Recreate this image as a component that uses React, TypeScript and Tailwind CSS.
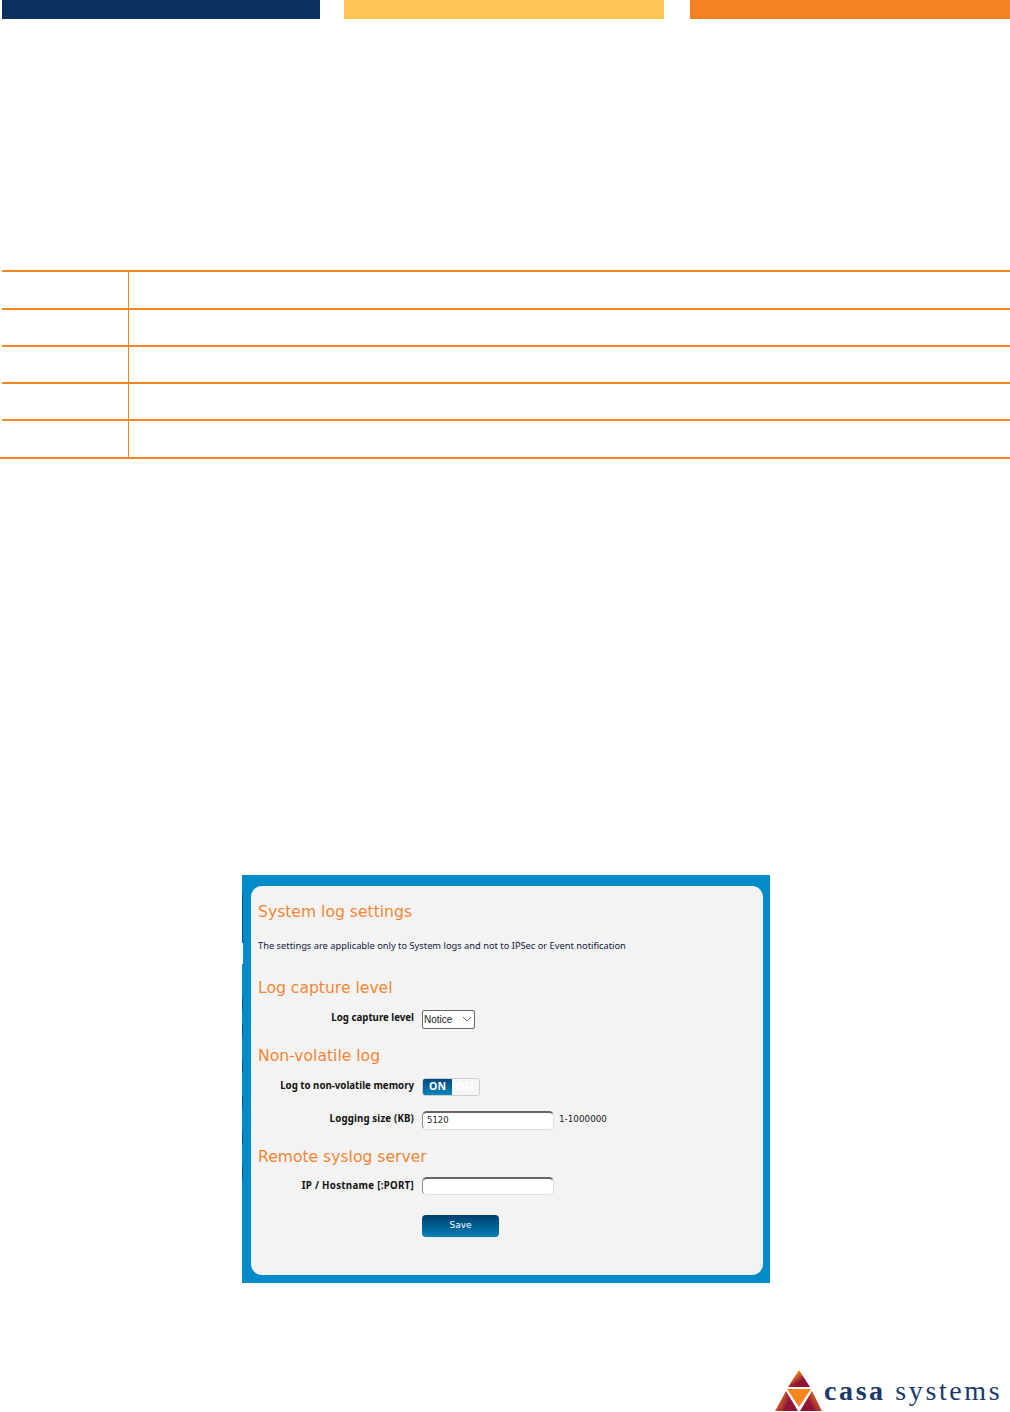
import React from "react";

const heading = "text-[#f58634] text-[15.6px] leading-[20px] font-['DejaVu_Sans',sans-serif] whitespace-nowrap";
const label = "w-[163px] text-right text-[9.7px] font-bold text-[#111] font-['Noto_Sans',sans-serif] whitespace-nowrap";
const input = "w-[132px] rounded-[5px] border border-[#dedede] border-t-2 border-t-[#666] border-l-[#888] bg-white";

function Row({ className = "" }: { className?: string }) {
  return (
    <div className={`flex border-t-2 border-[#f9851f] ${className}`}>
      <div className="w-[127px] border-r border-[#f9851f]" />
      <div className="flex-1" />
    </div>
  );
}

function Logo() {
  return (
    <svg width="48" height="42" viewBox="0 0 48 42" className="shrink-0">
      <defs>
        <linearGradient id="t" x1="0" y1="0" x2="1" y2="1">
          <stop offset="0.25" stopColor="#f7941d" />
          <stop offset="0.6" stopColor="#8f1436" />
        </linearGradient>
        <linearGradient id="l" x1="0" y1="0" x2="1" y2="0.4">
          <stop offset="0.1" stopColor="#f7941d" />
          <stop offset="0.7" stopColor="#8f1436" />
        </linearGradient>
        <linearGradient id="rr" x1="1" y1="0" x2="0" y2="0.6">
          <stop offset="0.1" stopColor="#f7941d" />
          <stop offset="0.7" stopColor="#8f1436" />
        </linearGradient>
      </defs>
      <polygon points="24,0 35,17 13,17" fill="url(#t)" />
      <polygon points="12,19 36,19 24,37" fill="#f7861f" />
      <polygon points="11,21 23,41 0,41" fill="url(#l)" />
      <polygon points="37,21 47,41 25,41" fill="url(#rr)" />
    </svg>
  );
}

export default function App() {
  return (
    <div className="w-[1010px] h-[1412px] bg-white overflow-hidden flex flex-col">
      <div className="flex h-[19px] shrink-0">
        <div className="ml-[2px] w-[318px] bg-[#0a3161]" />
        <div className="ml-[24px] w-[320px] bg-[#fec555]" />
        <div className="ml-[26px] w-[320px] bg-[#f58220]" />
      </div>

      <div className="mt-[251px] ml-[2px] shrink-0">
        <Row className="h-[38px]" />
        <Row className="h-[37px]" />
        <Row className="h-[37px]" />
        <Row className="h-[37px]" />
        <Row className="h-[38px]" />
      </div>
      <div className="h-[2px] bg-[#f9851f] shrink-0" />

      <div className="mt-[416px] ml-[242px] w-[528px] h-[408px] shrink-0 flex">
        <div className="w-[1px] h-full bg-[#008bc8] flex flex-col">
          <div className="mt-[18px] h-[50px] shrink-0 bg-[#0a56a0]" />
          <div className="h-[21px] shrink-0 bg-white" />
          <div className="mt-[33px] h-[13px] shrink-0 bg-[#0a56a0]" />
          <div className="mt-[13px] h-[15px] shrink-0 bg-[#0a56a0]" />
          <div className="mt-[21px] h-[14px] shrink-0 bg-[#0a56a0]" />
          <div className="mt-[22px] h-[15px] shrink-0 bg-[#0a56a0]" />
          <div className="mt-[20px] h-[15px] shrink-0 bg-[#0a56a0]" />
          <div className="mt-[21px] h-[15px] shrink-0 bg-[#0a56a0]" />
        </div>
        <div className="flex-1 bg-[#008bc8] pl-[8px] pr-[7px] pt-[11px] pb-[8px]">
          <div className="h-full rounded-[11px] bg-[#f3f3f3] pl-[7px] pt-[16px] flex flex-col">
            <div className={heading}>System log settings</div>
            <div className="mt-[18px] text-[9.3px] leading-[12px] text-[#10203a] whitespace-nowrap font-['Noto_Sans',sans-serif]">
              The settings are applicable only to System logs and not to IPSec or Event notification
            </div>
            <div className={`mt-[26px] ${heading}`}>Log capture level</div>
            <div className="mt-[11px] -ml-[7px] flex items-center gap-[8px] h-[20px]">
              <div className={`${label} pb-[1px]`}>Log capture level</div>
              <div className="w-[53px] h-[19px] border border-[#666] rounded-[2px] bg-white flex items-center justify-between pl-[1px] pr-[2px]">
                <span className="text-[10px] text-[#222] font-['Liberation_Sans',sans-serif]">Notice</span>
                <svg width="10" height="6" viewBox="0 0 10 6" fill="none" stroke="#666" strokeWidth="1"><path d="M1 1l4 4 4-4" /></svg>
              </div>
            </div>
            <div className={`mt-[17px] ${heading}`}>Non-volatile log</div>
            <div className="mt-[12px] -ml-[7px] flex items-center gap-[8px] h-[18px]">
              <div className={`${label} pb-[1px]`}>Log to non-volatile memory</div>
              <div className="w-[58px] h-[18px] rounded-[3px] border border-[#ccc] bg-white flex overflow-hidden text-[10.5px] font-bold font-['Noto_Sans',sans-serif]">
                <div className="w-[29px] bg-gradient-to-b from-[#004a7c] to-[#0084bd] text-white flex items-center justify-center">ON</div>
                <div className="flex-1 bg-[#f5f5f5] text-white flex items-center justify-center">OFF</div>
              </div>
            </div>
            <div className="mt-[14px] -ml-[7px] flex items-center gap-[8px] h-[20px]">
              <div className={`${label} pb-[1px] tracking-[0.15px]`}>Logging size (KB)</div>
              <div className={`${input} h-[19px] pl-[4px] text-[8.5px] leading-[14px] text-[#222] font-['DejaVu_Sans',sans-serif]`}>5120</div>
              <span className="-ml-[3px] text-[8.8px] text-[#222] font-['DejaVu_Sans',sans-serif]">1-1000000</span>
            </div>
            <div className={`mt-[17px] ${heading}`}>Remote syslog server</div>
            <div className="mt-[9px] -ml-[7px] flex items-center gap-[8px] h-[20px]">
              <div className={`${label} tracking-[0.3px]`}>IP / Hostname [:PORT]</div>
              <div className={`${input} h-[18px]`} />
            </div>
            <div className="mt-[19px] ml-[164px] w-[77px] h-[22px] rounded-[4px] bg-gradient-to-b from-[#003f6e] to-[#0080b8] text-white text-[9px] font-['DejaVu_Sans',sans-serif] flex items-center justify-center">Save</div>
          </div>
        </div>
      </div>

      <div className="mt-[87px] ml-[775px] flex items-center shrink-0">
        <Logo />
        <div className="ml-[1px] text-[28px] leading-[30px] tracking-[2.6px] text-[#1b3a6b] whitespace-nowrap font-['Liberation_Serif',serif]">
          <span className="font-bold">casa</span> systems
        </div>
      </div>
    </div>
  );
}
